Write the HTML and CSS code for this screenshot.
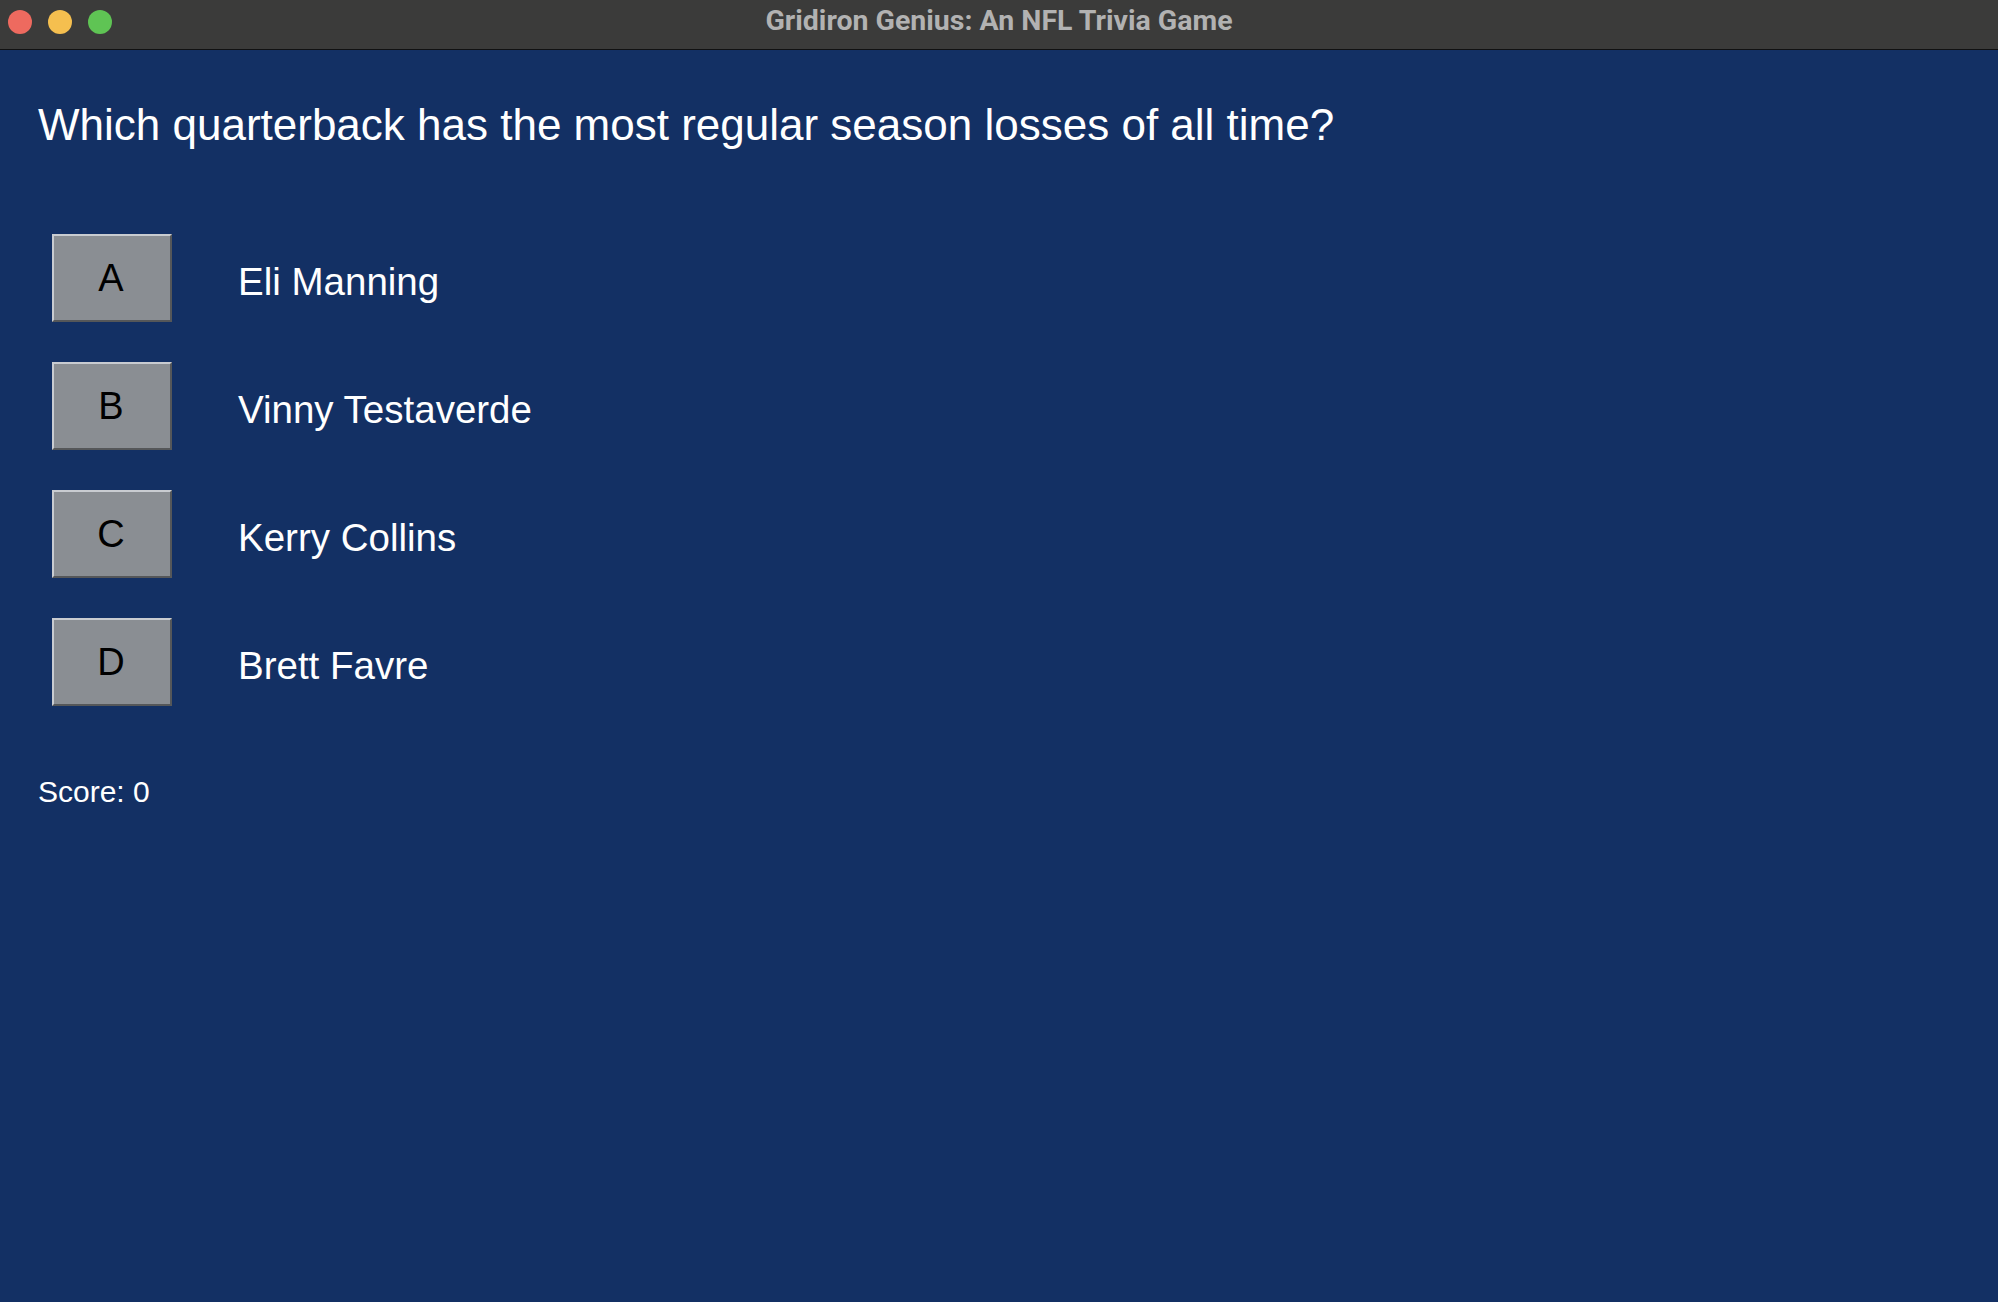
FILE: index.html
```html
<!DOCTYPE html>
<html>
<head>
<meta charset="utf-8">
<title>Gridiron Genius: An NFL Trivia Game</title>
<link rel="stylesheet" href="styles.css">
</head>
<body>
<div class="window">
  <div class="titlebar">
    <div class="lights">
      <span class="light red"></span>
      <span class="light yellow"></span>
      <span class="light green"></span>
    </div>
    <div class="title">Gridiron Genius: An NFL Trivia Game</div>
  </div>
  <main class="content">
    <h1 class="question">Which quarterback has the most regular season losses of all time?</h1>
    <div class="options">
      <div class="option"><button class="choice">A</button><span class="answer">Eli Manning</span></div>
      <div class="option"><button class="choice">B</button><span class="answer">Vinny Testaverde</span></div>
      <div class="option"><button class="choice">C</button><span class="answer">Kerry Collins</span></div>
      <div class="option"><button class="choice">D</button><span class="answer">Brett Favre</span></div>
    </div>
    <div class="score">Score: 0</div>
  </main>
</div>
</body>
</html>
```
FILE: styles.css
```css
html, body {
  margin: 0;
  padding: 0;
  height: 100%;
}
body {
  background: #133064;
  font-family: "Liberation Sans", Arial, sans-serif;
}
.window {
  display: flex;
  flex-direction: column;
  height: 100%;
}
.titlebar {
  position: relative;
  height: 49px;
  background: #3b3b3a;
  border-bottom: 1px solid #111111;
  display: flex;
  align-items: center;
  justify-content: center;
  flex-shrink: 0;
}
.lights {
  position: absolute;
  left: 8px;
  top: 10px;
  display: flex;
  gap: 16px;
}
.light {
  width: 24px;
  height: 24px;
  border-radius: 50%;
  display: block;
}
.red { background: #ee6a5f; }
.yellow { background: #f5bf4f; }
.green { background: #5fc454; }
.title {
  font-family: Roboto, "Noto Sans", sans-serif;
  font-weight: 700;
  font-size: 28.5px;
  color: #b2b2b2;
  line-height: 32px;
  margin-top: -8px;
}
.content {
  flex: 1;
  padding: 50px 0 0 38px;
  color: #ffffff;
}
.question {
  margin: 0;
  font-weight: 400;
  font-size: 44px;
  line-height: 50px;
}
.options {
  margin-top: 84px;
  margin-left: 14px;
  display: flex;
  flex-direction: column;
  gap: 40px;
}
.option {
  display: flex;
  align-items: center;
  gap: 66px;
}
.choice {
  box-sizing: border-box;
  width: 120px;
  height: 88px;
  margin: 0;
  padding: 0 2px 0 0;
  background: #8a8e93;
  border-style: solid;
  border-width: 2px;
  border-color: #c9ccd1 #555759 #555759 #c9ccd1;
  font-family: "Liberation Sans", Arial, sans-serif;
  font-size: 38px;
  color: #000000;
  line-height: 1;
}
.answer {
  font-size: 38.5px;
  line-height: 44px;
  margin-top: 7px;
}
.score {
  margin-top: 69px;
  font-size: 30px;
  line-height: 34px;
}
```
